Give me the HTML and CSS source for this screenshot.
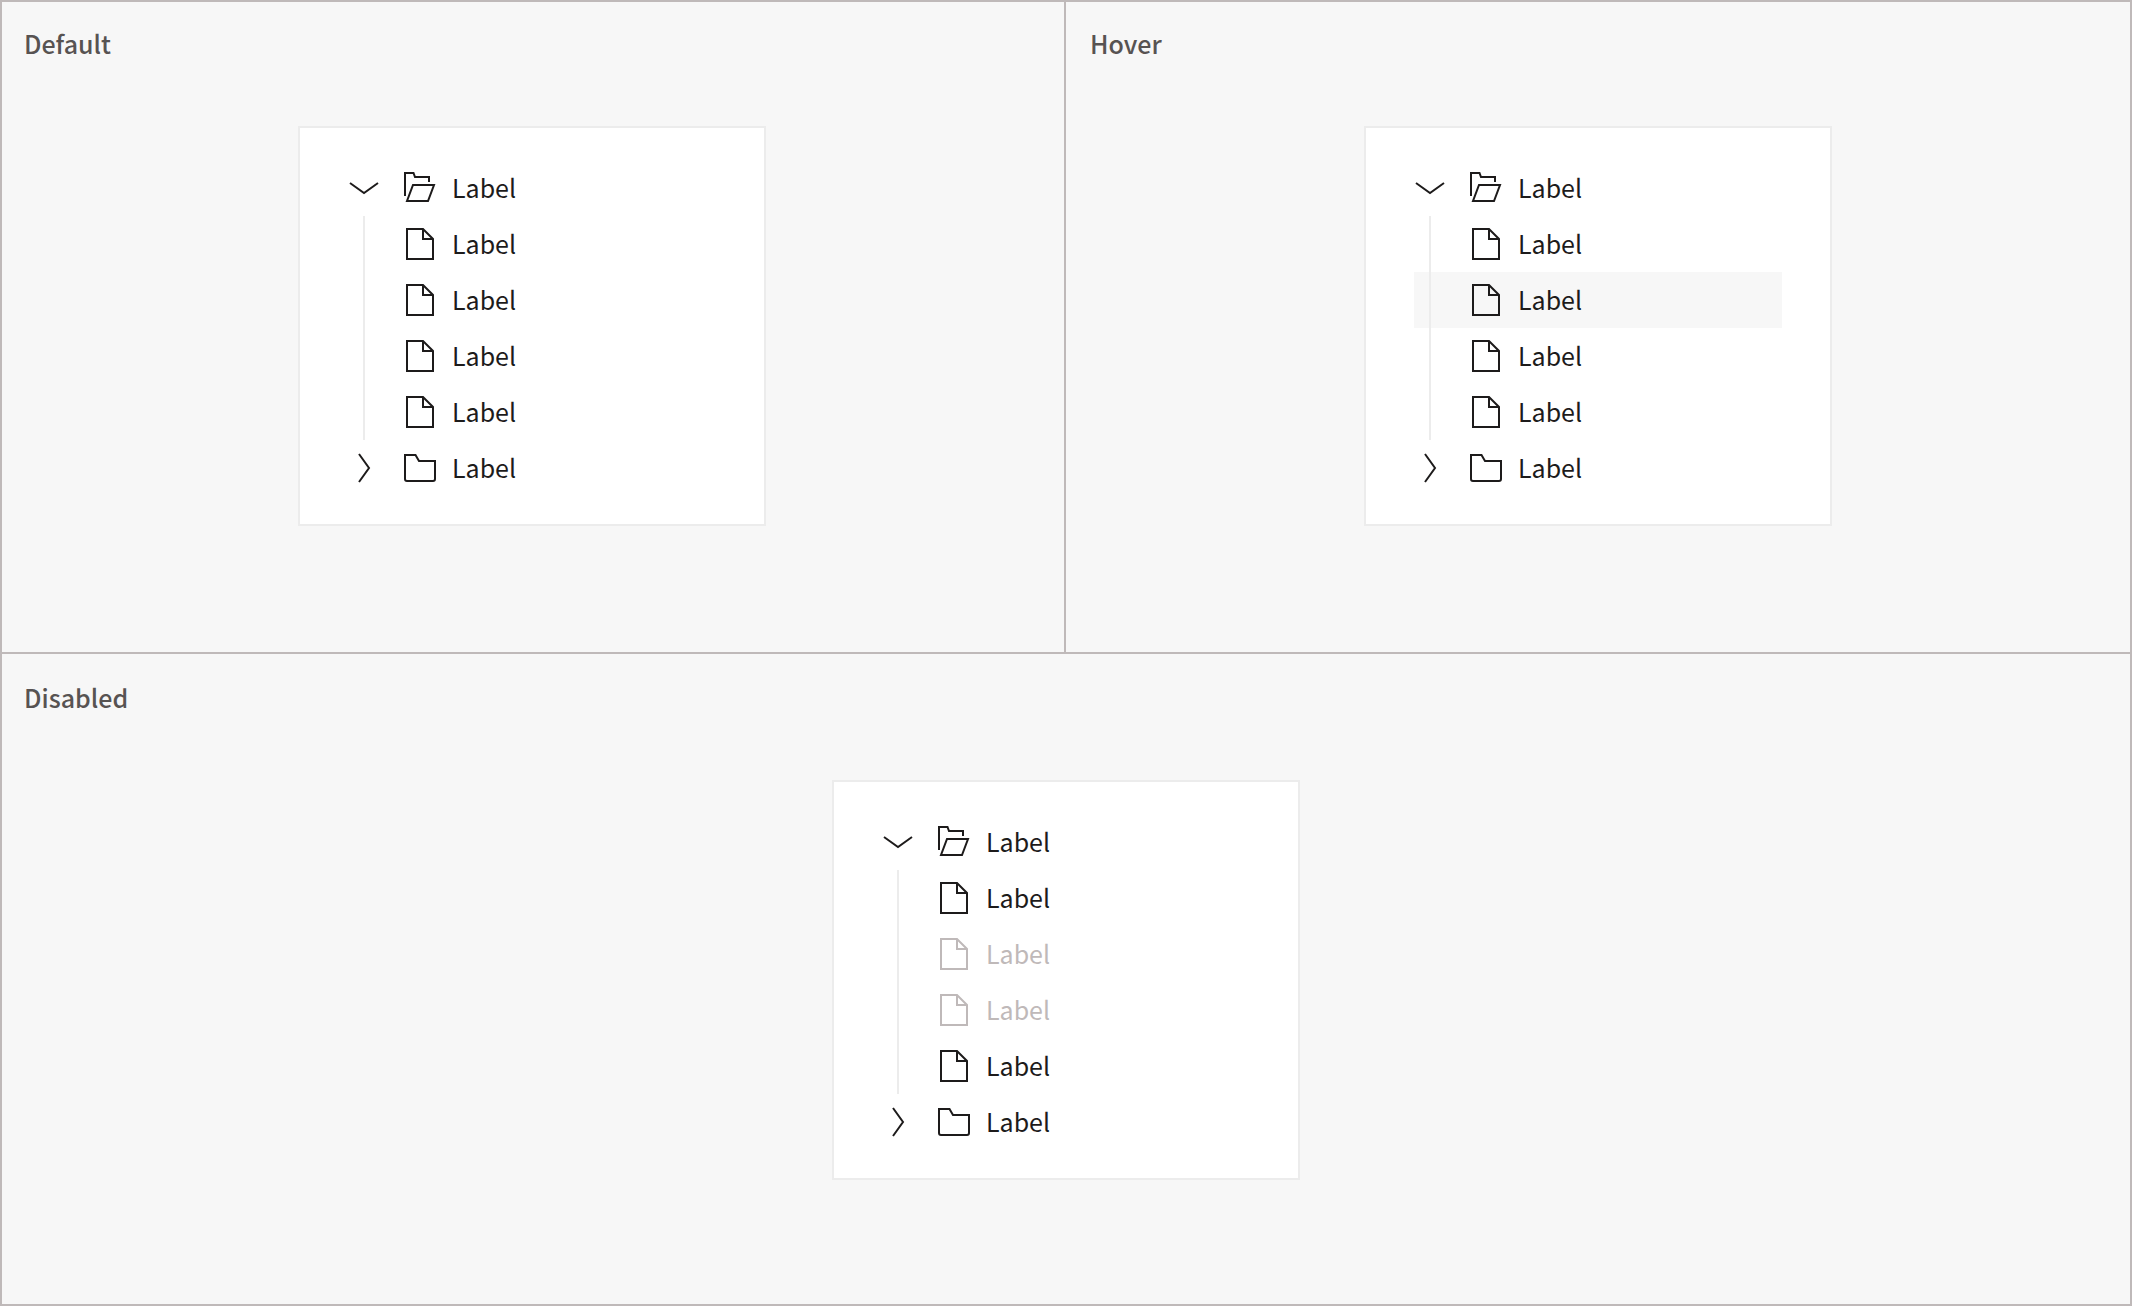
FILE: index.html
```html
<!DOCTYPE html>
<html lang="en">
<head>
<meta charset="utf-8">
<meta name="viewport" content="width=device-width, initial-scale=1">
<title>Tree view states</title>
<link rel="stylesheet" href="styles.css">
</head>
<body>
<svg class="sprite" aria-hidden="true">
  <symbol id="chevron-down" viewBox="0 0 32 32"><path d="M2 11 16 21 30 11"/></symbol>
  <symbol id="chevron-right" viewBox="0 0 32 32"><path d="M11 2 21 16 11 30"/></symbol>
  <symbol id="folder-open" viewBox="0 0 32 32"><path d="M1 24V1H9.500L11 5H25V10M9 13H30L24 29H3Z"/></symbol>
  <symbol id="folder" viewBox="0 0 32 32"><path d="M1 3H11.500L15 9H31V27A2 2 0 0 1 29 29H3A2 2 0 0 1 1 27Z"/></symbol>
  <symbol id="file" viewBox="0 0 32 32"><path d="M3 1H19L29 11V31H3ZM19 1V11H29"/></symbol>
</svg>
<main class="states">
  <section class="state">
    <h2 class="state-title">Default</h2>
    <ul class="tree">
      <li>
        <button class="row" type="button" aria-expanded="true"><svg class="icon chevron"><use href="#chevron-down"/></svg><svg class="icon"><use href="#folder-open"/></svg><span class="label">Label</span></button>
        <ul class="group">
          <li><button class="row leaf" type="button"><svg class="icon"><use href="#file"/></svg><span class="label">Label</span></button></li>
          <li><button class="row leaf" type="button"><svg class="icon"><use href="#file"/></svg><span class="label">Label</span></button></li>
          <li><button class="row leaf" type="button"><svg class="icon"><use href="#file"/></svg><span class="label">Label</span></button></li>
          <li><button class="row leaf" type="button"><svg class="icon"><use href="#file"/></svg><span class="label">Label</span></button></li>
        </ul>
      </li>
      <li><button class="row" type="button" aria-expanded="false"><svg class="icon chevron"><use href="#chevron-right"/></svg><svg class="icon"><use href="#folder"/></svg><span class="label">Label</span></button></li>
    </ul>
  </section>
  <section class="state">
    <h2 class="state-title">Hover</h2>
    <ul class="tree">
      <li>
        <button class="row" type="button" aria-expanded="true"><svg class="icon chevron"><use href="#chevron-down"/></svg><svg class="icon"><use href="#folder-open"/></svg><span class="label">Label</span></button>
        <ul class="group">
          <li><button class="row leaf" type="button"><svg class="icon"><use href="#file"/></svg><span class="label">Label</span></button></li>
          <li><button class="row leaf is-hover" type="button"><svg class="icon"><use href="#file"/></svg><span class="label">Label</span></button></li>
          <li><button class="row leaf" type="button"><svg class="icon"><use href="#file"/></svg><span class="label">Label</span></button></li>
          <li><button class="row leaf" type="button"><svg class="icon"><use href="#file"/></svg><span class="label">Label</span></button></li>
        </ul>
      </li>
      <li><button class="row" type="button" aria-expanded="false"><svg class="icon chevron"><use href="#chevron-right"/></svg><svg class="icon"><use href="#folder"/></svg><span class="label">Label</span></button></li>
    </ul>
  </section>
  <section class="state state-wide">
    <h2 class="state-title">Disabled</h2>
    <ul class="tree">
      <li>
        <button class="row" type="button" aria-expanded="true"><svg class="icon chevron"><use href="#chevron-down"/></svg><svg class="icon"><use href="#folder-open"/></svg><span class="label">Label</span></button>
        <ul class="group">
          <li><button class="row leaf" type="button"><svg class="icon"><use href="#file"/></svg><span class="label">Label</span></button></li>
          <li><button class="row leaf" type="button" disabled><svg class="icon"><use href="#file"/></svg><span class="label">Label</span></button></li>
          <li><button class="row leaf" type="button" disabled><svg class="icon"><use href="#file"/></svg><span class="label">Label</span></button></li>
          <li><button class="row leaf" type="button"><svg class="icon"><use href="#file"/></svg><span class="label">Label</span></button></li>
        </ul>
      </li>
      <li><button class="row" type="button" aria-expanded="false"><svg class="icon chevron"><use href="#chevron-right"/></svg><svg class="icon"><use href="#folder"/></svg><span class="label">Label</span></button></li>
    </ul>
  </section>
</main>
</body>
</html>
```
FILE: styles.css
```css
:root {
  --frame: #bfb9b9;
  --surface: #f7f7f7;
  --line: #ececec;
  --text: #1d1b1b;
  --title: #575352;
}

* {
  box-sizing: border-box;
}

body {
  margin: 0;
  background: var(--surface);
  color: var(--text);
  font-family: "Noto Sans CJK SC", "Noto Sans", sans-serif;
}

ul {
  list-style: none;
  margin: 0;
  padding: 0;
}

.sprite {
  display: none;
}

.states {
  display: grid;
  grid-template-columns: 1fr 1fr;
  box-shadow: inset 0 0 0 2px var(--frame);
}

.state {
  display: flex;
  flex-direction: column;
  align-items: center;
  padding-bottom: 126px;
  border-right: 2px solid var(--frame);
  border-bottom: 2px solid var(--frame);
}

.state-wide {
  grid-column: 1 / -1;
  border: 0;
}

.state-title {
  align-self: stretch;
  margin: 0;
  padding: 24px 24px 64px;
  color: var(--title);
  font-size: 25px;
  font-weight: 500;
  line-height: 38px;
}

.tree {
  width: 468px;
  max-width: 100%;
  padding: 32px 48px 28px;
  background: #fff;
  border: 2px solid var(--line);
}

.group {
  position: relative;
}

/* Guide line under the parent's chevron */
.group::before {
  content: "";
  position: absolute;
  top: 0;
  bottom: 0;
  left: 15px;
  width: 2px;
  background: var(--line);
}

.row {
  display: flex;
  align-items: center;
  gap: 16px;
  width: 100%;
  height: 56px;
  padding: 0;
  border: 0;
  background: none;
  color: inherit;
  font: inherit;
  font-size: 25px;
  line-height: 38px;
  text-align: left;
  cursor: pointer;
}

.leaf {
  padding-left: 56px;
}

.row:hover,
.is-hover {
  background: var(--surface);
}

.row:disabled {
  background: none;
  color: var(--frame);
  cursor: not-allowed;
}

.label {
  padding-bottom: 2px;
}

.icon {
  flex: none;
  width: 32px;
  height: 32px;
  fill: none;
  stroke: currentColor;
  stroke-width: 2;
}

.chevron {
  margin-right: 8px;
}
```
